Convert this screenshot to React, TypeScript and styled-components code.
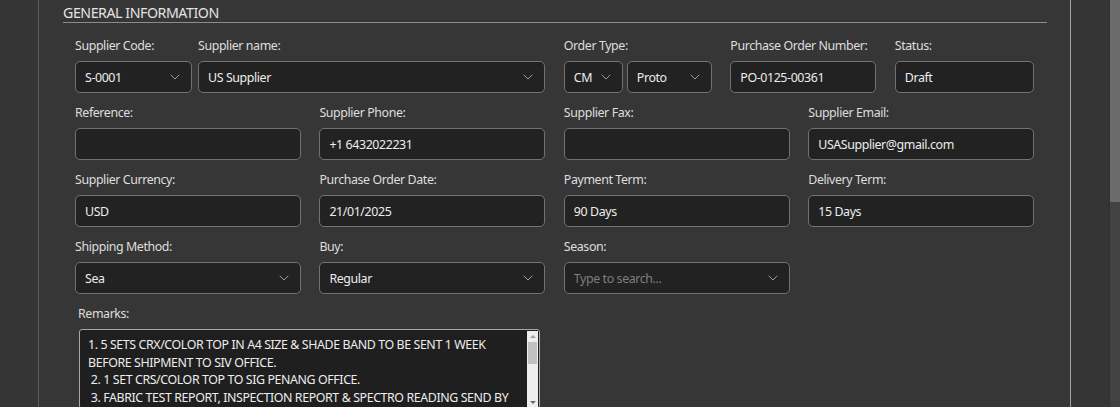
import React from "react";
import styled, { createGlobalStyle } from "styled-components";
import { ChevronDown } from "lucide-react";

const GlobalStyle = createGlobalStyle`
  html, body { margin: 0; padding: 0; background: #353535; overflow: hidden; }
  body { font-family: "Noto Sans", "Open Sans", sans-serif; }
  * { box-sizing: border-box; }
`;

const Page = styled.div`
  display: flex;
  height: 407px;
  width: 1120px;
  overflow: hidden;
  background: #353535;
`;

const Main = styled.div`
  flex: 1;
  padding: 0 38px 0 38px;
  display: flex;
`;

const Panel = styled.div`
  flex: 1;
  border-left: 1px solid #5e5e5e;
  border-right: 1px solid #a2a2a2;
  background: #363636;
  padding: 0 23px 0 24px;
`;

const Heading = styled.div`
  padding-top: 4px;
  font-size: 14.2px;
  letter-spacing: -0.45px;
  line-height: 18px;
  color: #e4e4e4;
  text-transform: uppercase;
  border-bottom: 1px solid #8c8c8c;
`;

const Body = styled.div`
  padding: 14px 13px 0 12px;
  display: flex;
  flex-direction: column;
  gap: 11px;
`;

const Grid = styled.div`
  display: grid;
  grid-template-columns: repeat(4, 1fr);
  column-gap: 18.67px;
`;

const HalfGrid = styled.div`
  display: grid;
  grid-template-columns: 1fr 1fr;
  column-gap: 18.67px;
`;

const Group = styled.div<{ $gap?: number }>`
  display: flex;
  gap: ${(p) => p.$gap ?? 6}px;
`;

const Field = styled.div<{ $w?: number }>`
  display: flex;
  flex-direction: column;
  gap: 6px;
  ${(p) => (p.$w ? `width: ${p.$w}px; flex: none;` : `flex: 1; min-width: 0;`)}
`;

const Label = styled.div`
  font-size: 12.4px;
  letter-spacing: -0.4px;
  line-height: 18px;
  color: #dedede;
  white-space: nowrap;
`;

const Control = styled.div<{ $placeholder?: boolean }>`
  height: 32px;
  border: 1.5px solid #727272;
  border-radius: 5px;
  background: #222222;
  display: flex;
  align-items: center;
  padding: 0 8px 0 9px;
  font-size: 12.4px;
  letter-spacing: -0.4px;
  color: ${(p) => (p.$placeholder ? "#7e7e7e" : "#ededed")};
  white-space: nowrap;
  overflow: hidden;
`;

const ControlText = styled.span`
  flex: 1;
  overflow: hidden;
`;

const Chevron = styled(ChevronDown)`
  flex: none;
  color: #9c9c9c;
`;

const Pair = styled.div`
  display: flex;
  gap: 4px;
`;

const RemarksField = styled.div`
  display: flex;
  flex-direction: column;
  gap: 6px;
  padding-left: 3px;
  width: 465px;
`;

const RemarksBox = styled.div`
  display: flex;
  height: 80px;
  border: 1px solid #a8a8a8;
  border-radius: 3px;
  background: #1f1f1f;
  padding: 1px;
  margin-left: 1px;
`;

const RemarksText = styled.textarea`
  flex: 1;
  border: none;
  outline: none;
  resize: none;
  overflow: hidden;
  background: transparent;
  color: #ededed;
  font-family: "Noto Sans", "Open Sans", sans-serif;
  font-size: 12.4px;
  letter-spacing: -0.4px;
  line-height: 17.5px;
  padding: 5px 6px 0 7px;
  white-space: pre-wrap;
`;

const ScrollTrack = styled.div`
  width: 11px;
  background: #eeeeee;
  display: flex;
  flex-direction: column;
  align-items: center;
`;

const ScrollArrow = styled.div<{ $down?: boolean }>`
  height: 10px;
  display: flex;
  align-items: center;
  justify-content: center;
  &::before {
    content: "";
    border-left: 3px solid transparent;
    border-right: 3px solid transparent;
    ${(p) =>
      p.$down
        ? "border-top: 3px solid #6a6a6a;"
        : "border-bottom: 3px solid #a0a0a0;"}
  }
`;

const ScrollThumbArea = styled.div`
  flex: 1;
  width: 100%;
  padding: 1px 1px;
`;

const ScrollThumb = styled.div`
  height: 22px;
  background: #c1c1c1;
`;

const PageScroll = styled.div`
  width: 11px;
  background: #424242;
  border-left: 1px solid #2f2f2f;
`;

const PageThumb = styled.div`
  height: 202px;
  background: #6b6b6b;
`;

const remarks =
  "1. 5 SETS CRX/COLOR TOP IN A4 SIZE & SHADE BAND TO BE SENT 1 WEEK BEFORE SHIPMENT TO SIV OFFICE.\n 2. 1 SET CRS/COLOR TOP TO SIG PENANG OFFICE.\n 3. FABRIC TEST REPORT, INSPECTION REPORT & SPECTRO READING SEND BY EMAIL BEFORE SHIPMENT.";

const Select = ({ value, placeholder }: { value?: string; placeholder?: string }) => (
  <Control $placeholder={!value}>
    <ControlText>{value ?? placeholder}</ControlText>
    <Chevron size={16} strokeWidth={1.5} />
  </Control>
);

const Input = ({ value }: { value?: string }) => (
  <Control>
    <ControlText>{value ?? ""}</ControlText>
  </Control>
);

export default function App() {
  return (
    <>
      <GlobalStyle />
      <Page>
        <Main>
          <Panel>
            <Heading>General Information</Heading>
            <Body>
              <HalfGrid>
                <Group>
                  <Field $w={117}>
                    <Label>Supplier Code:</Label>
                    <Select value="S-0001" />
                  </Field>
                  <Field>
                    <Label>Supplier name:</Label>
                    <Select value="US Supplier" />
                  </Field>
                </Group>
                <Group $gap={18.5}>
                  <Field $w={148}>
                    <Label>Order Type:</Label>
                    <Pair>
                      <Field $w={59}>
                        <Select value="CM" />
                      </Field>
                      <Field>
                        <Select value="Proto" />
                      </Field>
                    </Pair>
                  </Field>
                  <Field $w={146}>
                    <Label>Purchase Order Number:</Label>
                    <Input value="PO-0125-00361" />
                  </Field>
                  <Field>
                    <Label>Status:</Label>
                    <Input value="Draft" />
                  </Field>
                </Group>
              </HalfGrid>
              <Grid>
                <Field>
                  <Label>Reference:</Label>
                  <Input />
                </Field>
                <Field>
                  <Label>Supplier Phone:</Label>
                  <Input value="+1 6432022231" />
                </Field>
                <Field>
                  <Label>Supplier Fax:</Label>
                  <Input />
                </Field>
                <Field>
                  <Label>Supplier Email:</Label>
                  <Input value="USASupplier@gmail.com" />
                </Field>
              </Grid>
              <Grid>
                <Field>
                  <Label>Supplier Currency:</Label>
                  <Input value="USD" />
                </Field>
                <Field>
                  <Label>Purchase Order Date:</Label>
                  <Input value="21/01/2025" />
                </Field>
                <Field>
                  <Label>Payment Term:</Label>
                  <Input value="90 Days" />
                </Field>
                <Field>
                  <Label>Delivery Term:</Label>
                  <Input value="15 Days" />
                </Field>
              </Grid>
              <Grid>
                <Field>
                  <Label>Shipping Method:</Label>
                  <Select value="Sea" />
                </Field>
                <Field>
                  <Label>Buy:</Label>
                  <Select value="Regular" />
                </Field>
                <Field>
                  <Label>Season:</Label>
                  <Select placeholder="Type to search..." />
                </Field>
              </Grid>
              <RemarksField>
                <Label>Remarks:</Label>
                <RemarksBox>
                  <RemarksText readOnly value={remarks} />
                  <ScrollTrack>
                    <ScrollArrow />
                    <ScrollThumbArea>
                      <ScrollThumb />
                    </ScrollThumbArea>
                    <ScrollArrow $down />
                  </ScrollTrack>
                </RemarksBox>
              </RemarksField>
            </Body>
          </Panel>
        </Main>
        <PageScroll>
          <PageThumb />
        </PageScroll>
      </Page>
    </>
  );
}
